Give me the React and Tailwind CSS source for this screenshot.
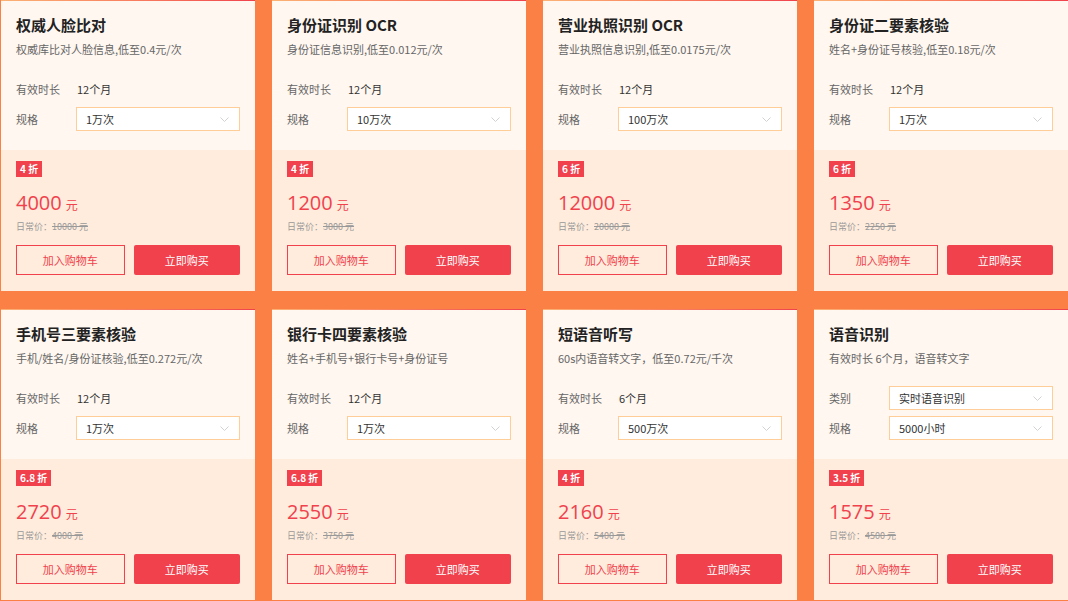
import React from "react";

const items = [
  { title: "权威人脸比对", sub: "权威库比对人脸信息,低至0.4元/次", rows: [["有效时长", "12个月"]], spec: "1万次", off: "4 折", price: "4000", orig: "10000" },
  { title: "身份证识别 OCR", sub: "身份证信息识别,低至0.012元/次", rows: [["有效时长", "12个月"]], spec: "10万次", off: "4 折", price: "1200", orig: "3000" },
  { title: "营业执照识别 OCR", sub: "营业执照信息识别,低至0.0175元/次", rows: [["有效时长", "12个月"]], spec: "100万次", off: "6 折", price: "12000", orig: "20000" },
  { title: "身份证二要素核验", sub: "姓名+身份证号核验,低至0.18元/次", rows: [["有效时长", "12个月"]], spec: "1万次", off: "6 折", price: "1350", orig: "2250" },
  { title: "手机号三要素核验", sub: "手机/姓名/身份证核验,低至0.272元/次", rows: [["有效时长", "12个月"]], spec: "1万次", off: "6.8 折", price: "2720", orig: "4000" },
  { title: "银行卡四要素核验", sub: "姓名+手机号+银行卡号+身份证号", rows: [["有效时长", "12个月"]], spec: "1万次", off: "6.8 折", price: "2550", orig: "3750" },
  { title: "短语音听写", sub: "60s内语音转文字，低至0.72元/千次", rows: [["有效时长", "6个月"]], spec: "500万次", off: "4 折", price: "2160", orig: "5400" },
  { title: "语音识别", sub: "有效时长 6个月，语音转文字", rows: [], cat: "实时语音识别", spec: "5000小时", off: "3.5 折", price: "1575", orig: "4500" },
];

function Select({ value }) {
  return (
    <div className="flex-1 h-[24px] bg-white border border-[#ffcd98] flex items-center justify-between pl-[9px] pr-[9px]">
      <span className="text-[11px] text-[#333]">{value}</span>
      <svg width="9" height="5" viewBox="0 0 9 5" className="mr-[1px]">
        <polyline points="0.5,0.5 4.5,4.5 8.5,0.5" fill="none" stroke="#d2d2d2" strokeWidth="1" />
      </svg>
    </div>
  );
}

function Card({ it }) {
  return (
    <div className="h-[291px] flex flex-col">
      <div className="h-[1px] bg-gradient-to-r from-[#fbb274] to-[#f0414d]" />
      <div className="h-[149px] bg-[#fff7f0] px-[15px] pt-[14px]">
        <div className="text-[15px] leading-[20px] font-bold text-[#222]">{it.title}</div>
        <div className="mt-[4px] text-[11px] leading-[20px] text-[#666]">{it.sub}</div>
        <div className="mt-[18px] flex flex-col gap-[6px]">
          {it.rows.map(([k, v]) => (
            <div key={k} className="h-[24px] flex items-center">
              <span className="w-[61px] text-[11px] text-[#666]">{k}</span>
              <span className="text-[11px] text-[#333]">{v}</span>
            </div>
          ))}
          {it.cat && (
            <div className="h-[24px] flex items-center">
              <span className="w-[60px] text-[11px] text-[#666]">类别</span>
              <Select value={it.cat} />
            </div>
          )}
          <div className="h-[24px] flex items-center">
            <span className="w-[60px] text-[11px] text-[#666]">规格</span>
            <Select value={it.spec} />
          </div>
        </div>
      </div>
      <div className="flex-1 bg-[#ffecdc] px-[15px] pt-[11px]">
        <div className="flex">
          <span className="h-[16px] px-[4px] bg-[#f0414d] text-white text-[10px] font-bold leading-[16px]">{it.off}</span>
        </div>
        <div className="mt-[12px] h-[28px] flex items-baseline text-[#f0414d]">
          <span className="text-[20px] leading-[28px]" style={{ fontFamily: '"Open Sans", sans-serif' }}>{it.price}</span>
          <span className="ml-[4px] text-[12px]">元</span>
        </div>
        <div className="mt-[3px] text-[9px] leading-[14px] text-[#999]">
          日常价：<span className="line-through">{it.orig} 元</span>
        </div>
        <div className="mt-[11px] flex gap-[9px]">
          <button className="flex-1 h-[30px] border border-[#f0414d] text-[#f0414d] text-[11px] bg-transparent">加入购物车</button>
          <button className="flex-1 h-[30px] bg-[#f0414d] text-white text-[11px] rounded-[2px]">立即购买</button>
        </div>
      </div>
    </div>
  );
}

export default function App() {
  return (
    <div
      className="w-[1068px] h-[601px] overflow-hidden bg-[#fa8046] pl-[1px]"
      style={{ fontFamily: '"Noto Sans CJK SC", "Noto Sans", sans-serif' }}
    >
      <div className="grid grid-cols-4 gap-x-[17px] gap-y-[18px]">
        {items.map((it) => (
          <Card key={it.title} it={it} />
        ))}
      </div>
    </div>
  );
}
